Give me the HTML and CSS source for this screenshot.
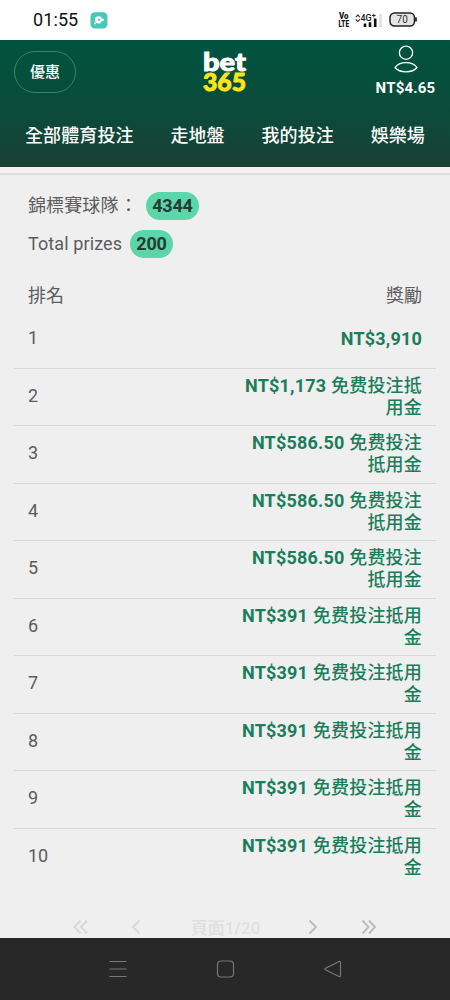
FILE: index.html
```html
<!DOCTYPE html>
<html lang="zh-Hant">
<head>
<meta charset="utf-8">
<title>bet365</title>
<link rel="stylesheet" href="styles.css">
</head>
<body>
<div class="phone">
  <div class="status">
    <span class="clock">01:55</span>
    <svg class="app" width="18" height="17" viewBox="0 0 18 17"><rect x=".5" y=".3" width="17" height="16.2" rx="4.5" fill="#48c9b8"/><circle cx="8.500" cy="7.800" r="3.600" fill="#fff"/><circle cx="5" cy="11.500" r="1" fill="#fff"/><circle cx="12.600" cy="7.800" r="1.300" fill="#fff"/><circle cx="9" cy="7.800" r="1.100" fill="#48c9b8"/></svg>
    <svg class="volte" width="12" height="16" viewBox="0 0 12 16"><text x="1" y="7.300" textLength="9.500" lengthAdjust="spacingAndGlyphs">Vo</text><text x=".5" y="14.800" textLength="10.500" lengthAdjust="spacingAndGlyphs">LTE</text></svg>
    <svg class="signal" width="28" height="18" viewBox="0 0 28 18"><path d="M.8 6.200 2.800 4l2 2.200M.8 8.300l2 2.200 2-2.200" fill="none" stroke="#222" stroke-width="1.100"/><text x="5.500" y="9.800" class="net">4G</text><path d="M17 4.500h3.600M18.800 2.700v3.600" stroke="#222" stroke-width="1"/><path d="M10 12.500v3.500M15 11.300v4.700M20.200 7.500V16" stroke="#111" stroke-width="2.600"/><path d="M25.500 3v13" stroke="#ddd" stroke-width="2.400"/></svg>
    <svg class="battery" width="29" height="16" viewBox="0 0 29 16"><rect x="1" y="1" width="24.500" height="13" rx="4.500" fill="#e5e5e5" stroke="#222" stroke-width="1.500"/><path d="M27 5.500v4" stroke="#222" stroke-width="1.800"/><text x="13.200" y="11.300" class="pct">70</text></svg>
  </div>
  <header class="header">
    <div class="top">
      <div class="offer">優惠</div>
      <svg class="logo" width="46" height="44" viewBox="0 0 46 44"><text x="1" y="20.500" textLength="43" lengthAdjust="spacingAndGlyphs">bet</text><text class="num" x="1" y="40.500" textLength="43" lengthAdjust="spacingAndGlyphs">365</text></svg>
      <div class="account">
        <svg width="26" height="28" viewBox="0 0 26 28" fill="none" stroke="#fff" stroke-width="1.300"><circle cx="13" cy="7.700" r="6.600"/><path d="M2 22.500C4.500 18.800 8.500 17.600 13 17.600s8.500 1.200 11 4.900c-2.500 3-6.500 4.300-11 4.300S4.500 25.500 2 22.500Z"/></svg>
        <span>NT$4.65</span>
      </div>
    </div>
    <nav class="nav"><span>全部體育投注</span><span>走地盤</span><span>我的投注</span><span>娛樂場</span></nav>
  </header>
  <div class="edge"></div>
  <main class="main">
    <div class="stat"><span class="teams">錦標賽球隊<span class="colon">：</span></span><b class="pill p1">4344</b></div>
    <div class="stat"><span class="total">Total prizes</span><b class="pill p2">200</b></div>
    <div class="thead"><span>排名</span><span>獎勵</span></div>
    <div class="table">
      <div class="row"><span class="rank">1</span><span class="prize"><b>NT$3,910</b></span></div>
      <div class="row"><span class="rank">2</span><span class="prize"><b>NT$1,173</b> 免费投注抵<br>用金</span></div>
      <div class="row"><span class="rank">3</span><span class="prize"><b>NT$586.50</b> 免费投注<br>抵用金</span></div>
      <div class="row"><span class="rank">4</span><span class="prize"><b>NT$586.50</b> 免费投注<br>抵用金</span></div>
      <div class="row"><span class="rank">5</span><span class="prize"><b>NT$586.50</b> 免费投注<br>抵用金</span></div>
      <div class="row"><span class="rank">6</span><span class="prize"><b>NT$391</b> 免费投注抵用<br>金</span></div>
      <div class="row"><span class="rank">7</span><span class="prize"><b>NT$391</b> 免费投注抵用<br>金</span></div>
      <div class="row"><span class="rank">8</span><span class="prize"><b>NT$391</b> 免费投注抵用<br>金</span></div>
      <div class="row"><span class="rank">9</span><span class="prize"><b>NT$391</b> 免费投注抵用<br>金</span></div>
      <div class="row"><span class="rank">10</span><span class="prize"><b>NT$391</b> 免费投注抵用<br>金</span></div>
    </div>
    <div class="pager">
      <svg class="prev" width="70" height="16" viewBox="0 0 70 16"><path d="M7.500 1.500 1.500 8l6 6.500M14 1.500 8 8l6 6.500M66.500 1.500 60 8l6.500 6.500"/></svg>
      <span>頁面1/20</span>
      <svg class="next" width="70" height="16" viewBox="0 0 70 16"><path d="M1.500 1.500 8 8l-6.500 6.500M54.500 1.500 60.500 8l-6 6.500M61 1.500 67 8l-6 6.500"/></svg>
    </div>
  </main>
  <footer class="keys">
    <svg width="20" height="20" viewBox="0 0 20 20"><path d="M1.500 2.500h17M1.500 10h17M1.500 17.500h17"/></svg>
    <svg width="20" height="20" viewBox="0 0 20 20"><rect x="1.500" y="2" width="16" height="16" rx="3.500"/></svg>
    <svg width="20" height="20" viewBox="0 0 20 20"><path d="M16 2.500 2.500 9.200q-1.300.8 0 1.600L16 17.500q1.500.5 1.500-1V3.500q0-1.500-1.500-1Z"/></svg>
  </footer>
</div>
</body>
</html>
```
FILE: styles.css
```css
* { box-sizing: border-box; }
body { margin: 0; font-family: Roboto, "Noto Sans CJK TC", sans-serif; }
.phone { width: 450px; height: 1000px; display: flex; flex-direction: column; overflow: hidden; background: #efefef; }
.status { height: 40px; flex: none; display: flex; align-items: center; background: #fff; padding: 0 31px 0 33px; }
.clock { font-size: 18px; width: 57px; color: #111; letter-spacing: .1px; padding-bottom: 1px; }
.volte { margin: 0 5px 0 230px; fill: #111; font: 900 8.500px Roboto, sans-serif; overflow: visible; }
.net { font: 500 9px Roboto, sans-serif; fill: #222; }
.battery { margin-left: 6px; }
.pct { font: 10px Roboto, sans-serif; fill: #333; text-anchor: middle; }
.header { height: 127px; flex: none; background: linear-gradient(#005440, #0c4a3a 60%, #1a4034); color: #fff; }
.top { height: 64px; display: flex; justify-content: space-between; padding: 0 14px; }
.offer { margin-top: 11px; width: 62px; height: 42px; border: 1px solid #3f8069; border-radius: 21px; font-size: 15px; font-weight: 500; line-height: 40px; text-align: center; }
.logo { margin-top: 10px; font: 900 24px Lato, sans-serif; fill: #fff; stroke: #fff; stroke-width: .9px; overflow: visible; }
.num { fill: #ffe418; stroke: #ffe418; }
.account { width: 62px; display: flex; flex-direction: column; align-items: center; padding-top: 5px; font-size: 15px; font-weight: 700; line-height: 20px; white-space: nowrap; letter-spacing: .2px; }
.account svg { margin-left: 2px; }
.account span { margin: 5px 0 0 1px; }
.nav { display: flex; justify-content: space-between; padding: 20px 25px 0; font-size: 18px; line-height: 24px; font-weight: 500; letter-spacing: .1px; }
.edge { height: 8px; flex: none; background: #f3f1f1; border-bottom: 2px solid #e2dcdd; }
.main { height: 763px; flex: none; padding: 17px 14px 0; color: #5c5c5c; font-size: 18px; }
.stat { display: flex; align-items: center; height: 28px; margin: 0 0 9.500px 14px; }
.teams { width: 118px; white-space: nowrap; line-height: 26px; letter-spacing: .1px; }
.colon { padding-left: 1px; }
.total { width: 102px; letter-spacing: .1px; }
.pill { height: 28px; border-radius: 14px; background: #5ad6aa; color: #263b34; line-height: 28px; text-align: center; letter-spacing: -.2px; }
.p1 { width: 53px; }
.p2 { width: 43px; }
.thead { display: flex; justify-content: space-between; padding: 0 14px; height: 26px; line-height: 26px; margin-top: 25px; }
.table { margin-top: 2.500px; }
.row { height: 57.500px; border-bottom: 1px solid #d8d8d8; display: flex; align-items: center; justify-content: space-between; padding: 0 14px; }
.row:last-child { border-bottom: 0; }
.rank { padding-bottom: 3px; }
.prize { font-weight: 500; color: #1b7e5b; text-align: right; line-height: 22px; letter-spacing: .2px; }
.prize b { font-weight: 700; }
.pager { margin-top: 28.500px; height: 24px; display: flex; align-items: center; justify-content: space-between; padding: 0 58px 0 59px; color: #e0e0e0; font-size: 17px; font-weight: 500; }
.pager span { padding-bottom: 1px; }
.pager svg { fill: none; stroke-width: 1.900; overflow: visible; }
.prev { stroke: #d8d8d8; }
.next { stroke: #bcbcbc; }
.keys { height: 62px; flex: none; background: #282828; display: flex; align-items: center; justify-content: space-between; padding: 0 107px 0 108px; }
.keys svg { fill: none; stroke: #777; stroke-width: 1.200; }
```
